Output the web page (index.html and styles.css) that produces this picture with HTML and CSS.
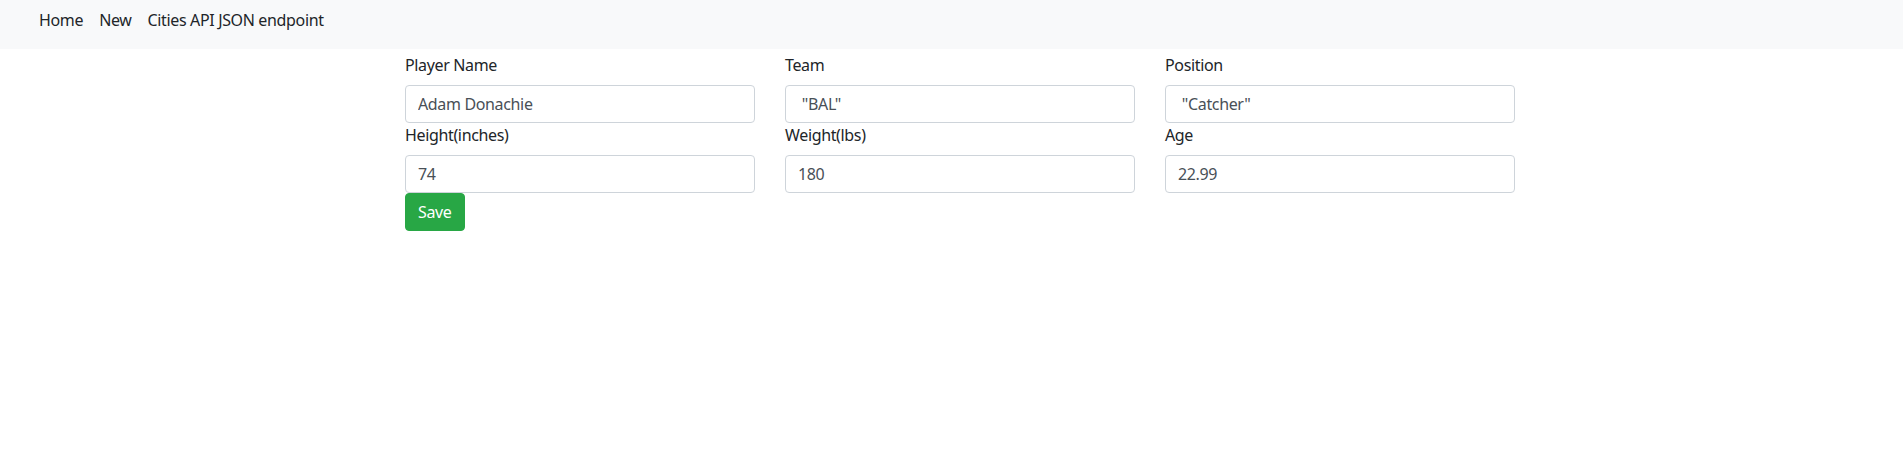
FILE: index.html
```html
<!DOCTYPE html>
<html lang="en">
<head>
<meta charset="utf-8">
<title>Edit Player</title>
<link rel="stylesheet" href="styles.css">
</head>
<body>
<nav class="navbar">
  <ul class="nav">
    <li><a class="nav-link" href="#">Home</a></li>
    <li><a class="nav-link" href="#">New</a></li>
    <li><a class="nav-link" href="#">Cities API JSON endpoint</a></li>
  </ul>
</nav>
<main class="page">
  <form class="container">
    <div class="row">
      <div class="field">
        <label class="label" for="name">Player Name</label>
        <input class="input" id="name" type="text" value="Adam Donachie">
      </div>
      <div class="field">
        <label class="label" for="team">Team</label>
        <input class="input" id="team" type="text" value=' "BAL"'>
      </div>
      <div class="field">
        <label class="label" for="pos">Position</label>
        <input class="input" id="pos" type="text" value=' "Catcher"'>
      </div>
    </div>
    <div class="row">
      <div class="field">
        <label class="label" for="height">Height(inches)</label>
        <input class="input" id="height" type="text" value="74">
      </div>
      <div class="field">
        <label class="label" for="weight">Weight(lbs)</label>
        <input class="input" id="weight" type="text" value="180">
      </div>
      <div class="field">
        <label class="label" for="age">Age</label>
        <input class="input" id="age" type="text" value="22.99">
      </div>
    </div>
    <div class="actions">
      <button class="btn-save" type="submit">Save</button>
    </div>
  </form>
</main>
</body>
</html>
```

FILE: styles.css
```css
* { box-sizing: border-box; }

html, body {
  margin: 0;
  padding: 0;
  background: #fff;
}

body {
  font-family: "Noto Sans", "Open Sans", sans-serif;
  font-size: 16px;
  line-height: 1.5;
  letter-spacing: -0.35px;
  color: #212529;
}

.navbar {
  height: 49px;
  background: #f8f9fa;
  padding: 8px 16px 0 31px;
}

.nav {
  display: flex;
  list-style: none;
  margin: 0;
  padding: 0;
}

.nav-link {
  display: block;
  padding: 0 8px;
  color: #212529;
  text-decoration: none;
}

.page {
  padding-left: 17px;
}

.container {
  max-width: 1140px;
  margin: 4px auto 0;
  padding: 0 15px;
}

.row {
  display: grid;
  grid-template-columns: repeat(3, 1fr);
  column-gap: 30px;
}

.field {
  display: flex;
  flex-direction: column;
}

.label {
  display: block;
  margin-bottom: 8px;
}

.input {
  display: block;
  width: 100%;
  height: 38px;
  padding: 6px 12px;
  font-family: inherit;
  font-size: 16px;
  line-height: 1.5;
  letter-spacing: -0.35px;
  color: #495057;
  background: #fff;
  border: 1px solid #ced4da;
  border-radius: 4px;
  white-space: pre;
}

.actions {
  display: flex;
}

.btn-save {
  font-family: inherit;
  font-size: 16px;
  line-height: 1.5;
  letter-spacing: -0.35px;
  padding: 6px 12px;
  color: #fff;
  background: #28a745;
  border: 1px solid #28a745;
  border-radius: 4px;
  cursor: pointer;
}
```
